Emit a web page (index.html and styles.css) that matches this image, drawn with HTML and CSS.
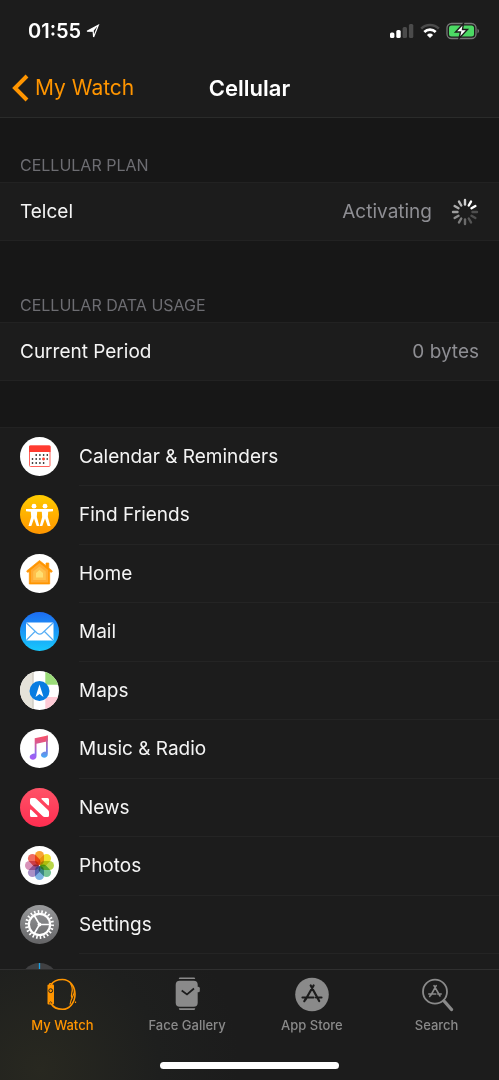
FILE: index.html
```html
<!DOCTYPE html>
<html lang="en">
<head>
    <meta charset="UTF-8">
    <meta name="viewport" content="width=device-width, initial-scale=1.0">
    <title>Cellular</title>
    <link rel="stylesheet" href="styles.css">
</head>
<body>
    <header class="top">
        <div class="status-bar">
            <div class="clock">
                <span>01:55</span>
                <svg width="14" height="14" viewBox="0 0 14 14"><path d="M1 7.2 12.3 1.2 7.6 13 7.2 7.2Z" fill="none" stroke="#fff" stroke-width="1.2"/><path d="M1 7.2 12.3 1.2 7.2 7.2Z" fill="#fff"/></svg>
            </div>
            <div class="status-icons">
                <svg width="24" height="16" viewBox="0 0 24 16">
                    <rect x="0" y="9.5" width="4.4" height="5.500" rx="1.500" fill="#fff"/>
                    <rect x="6.300" y="7" width="4.400" height="8" rx="1.500" fill="#fff"/>
                    <rect x="12.600" y="4" width="4.400" height="11" rx="1.500" fill="#4b4b4b"/>
                    <rect x="18.900" y="1" width="4.400" height="14" rx="1.500" fill="#4b4b4b"/>
                </svg>
                <svg width="20" height="16" viewBox="0 0 20 16" fill="none" stroke-width="2.6">
                    <path d="M1.2 5.6a12.4 12.4 0 0 1 17.6 0" stroke="#4b4b4b"/>
                    <path d="M4.3 9a8 8 0 0 1 11.4 0" stroke="#fff"/>
                    <path d="M10 15 6.9 11.9a4.4 4.4 0 0 1 6.2 0Z" fill="#fff"/>
                </svg>
                <svg width="34" height="18" viewBox="0 0 34 18">
                    <rect x="1" y="1.5" width="29" height="15" rx="4.5" fill="none" stroke="#777" stroke-width="1.3"/>
                    <path d="M31.5 6.5q3 2.500 0 5Z" fill="#777"/>
                    <rect x="3" y="3.500" width="25" height="11" rx="2.500" fill="#4cd964"/>
                    <path d="M17.500 1.500 9.500 10h5l-1.500 6.500 8.500-9h-5Z" fill="#fff" stroke="#1c1c1c" stroke-width="1.4"/>
                </svg>
            </div>
        </div>
        <nav class="nav-bar">
            <a class="back" href="#">
                <svg width="18" height="28" viewBox="0 0 18 28"><path d="M15 2 3 14l12 12" fill="none" stroke="#ff9500" stroke-width="4"/></svg>
                <span>My Watch</span>
            </a>
            <h1>Cellular</h1>
        </nav>
    </header>

    <main class="content">
        <section class="group">
            <h2>CELLULAR PLAN</h2>
            <div class="row">
                <span>Telcel</span>
                <span class="value">Activating
                    <svg class="spinner" width="28" height="28" viewBox="-14 -14 28 28" stroke="#fff" stroke-width="2.4" stroke-linecap="round">
                        <path d="M0-12V-7.500" opacity=".8"/>
                        <path d="M0-12V-7.500" transform="rotate(30)"/>
                        <path d="M0-12V-7.500" transform="rotate(60)"/>
                        <path d="M0-12V-7.500" transform="rotate(90)" opacity=".22"/>
                        <path d="M0-12V-7.500" transform="rotate(120)" opacity=".22"/>
                        <path d="M0-12V-7.500" transform="rotate(150)" opacity=".25"/>
                        <path d="M0-12V-7.500" transform="rotate(180)" opacity=".34"/>
                        <path d="M0-12V-7.500" transform="rotate(210)" opacity=".42"/>
                        <path d="M0-12V-7.500" transform="rotate(240)" opacity=".5"/>
                        <path d="M0-12V-7.500" transform="rotate(270)" opacity=".57"/>
                        <path d="M0-12V-7.500" transform="rotate(300)" opacity=".63"/>
                        <path d="M0-12V-7.500" transform="rotate(330)" opacity=".7"/>
                    </svg>
                </span>
            </div>
        </section>

        <section class="group">
            <h2>CELLULAR DATA USAGE</h2>
            <div class="row">
                <span>Current Period</span>
                <span class="value">0 bytes</span>
            </div>
        </section>

        <ul class="apps">
            <li>
                <svg class="app-icon" viewBox="0 0 39 39">
                    <circle cx="19.5" cy="19.5" r="19.500" fill="#fff"/>
                    <rect x="9.500" y="9" width="20.500" height="20.500" rx="1" fill="#fff" stroke="#ff6159"/>
                    <path d="M9 9.500q0-1 1-1h19.500q1 0 1 1V15H9Z" fill="#ff3b30"/>
                    <path d="M15.500 18h12.500M11.800 22h16M11.800 26h12.500" stroke="#444" stroke-width="2" stroke-dasharray="1.400 2.300"/>
                    <circle cx="23.500" cy="22" r="1.400" fill="#ff3b30"/>
                </svg>
                <span>Calendar &amp; Reminders</span>
            </li>
            <li>
                <svg class="app-icon" viewBox="0 0 39 39">
                    <linearGradient id="friends" x2="0" y2="1"><stop stop-color="#fc0"/><stop offset="1" stop-color="#ff9500"/></linearGradient>
                    <circle cx="19.500" cy="19.500" r="19.500" fill="url(#friends)"/>
                    <g fill="#fff">
                        <circle cx="14" cy="11.200" r="2.400"/>
                        <circle cx="25" cy="11.200" r="2.400"/>
                        <path d="M6 14h27v2.200l-4.800.6-.4 5.200 2.700 9h-2.800L25 23.500 22.300 31h-2.600l2.500-9-.4-5.200h-4.600l-.4 5.200 2.500 9h-2.600L14 23.500 11.300 31H8.500l2.700-9-.4-5.200-4.800-.6Z"/>
                    </g>
                </svg>
                <span>Find Friends</span>
            </li>
            <li>
                <svg class="app-icon" viewBox="0 0 39 39">
                    <circle cx="19.500" cy="19.500" r="19.500" fill="#fff"/>
                    <path d="M19.500 6.500 26 11.700V9h2.800v5l3.600 3-1.100 1.400-1.600-1V30H9.300V17.400l-1.600 1L6.600 17Z" fill="#ff9500" stroke="#ff9500" stroke-linejoin="round" stroke-width=".7"/>
                    <path d="m19.500 9 8.700 7v12.500H10.800V16Z" fill="#ffac35"/>
                    <path d="m19.500 12.500 6.300 5V26H13.200v-8.500Z" fill="#ffc04b"/>
                    <path d="m19.500 16 3.500 3v4.500h-7V19Z" fill="#ffdf72"/>
                </svg>
                <span>Home</span>
            </li>
            <li>
                <svg class="app-icon" viewBox="0 0 39 39">
                    <linearGradient id="mail" x2="0" y2="1"><stop stop-color="#1d6cf2"/><stop offset="1" stop-color="#18c8fc"/></linearGradient>
                    <circle cx="19.500" cy="19.500" r="19.500" fill="url(#mail)"/>
                    <rect x="6" y="10.500" width="27.500" height="18" rx="1.300" fill="#fff"/>
                    <path d="m6.500 11 10.500 10q2.700 2.400 5.400 0L33 11M6.500 28l8.500-8.500M33 28l-8.500-8.500" fill="none" stroke="#56aef5" stroke-width="1.200"/>
                </svg>
                <span>Mail</span>
            </li>
            <li>
                <svg class="app-icon" viewBox="0 0 39 39">
                    <clipPath id="disc"><circle cx="19.500" cy="19.500" r="19.500"/></clipPath>
                    <g clip-path="url(#disc)">
                        <path d="M0 0h39v39H0Z" fill="#fff"/>
                        <path d="M0 0h13.700v39H0Z" fill="#e5e2d9"/>
                        <path d="M12 0h1.700v39H12Z" fill="#d6d3ca"/>
                        <path d="M25.300 0H39v13.700H25.300Z" fill="#9bdc79"/>
                        <path d="M25.300 26H39v13H25.300Z" fill="#ffcbd6"/>
                    </g>
                    <circle cx="19.500" cy="20" r="10" fill="#087ce1"/>
                    <path d="M19.500 13.500 23.500 26l-4-3-4 3Z" fill="#fff"/>
                </svg>
                <span>Maps</span>
            </li>
            <li>
                <svg class="app-icon" viewBox="0 0 39 39">
                    <linearGradient id="music" x1=".6" y1="0" x2=".4" y2="1"><stop stop-color="#fb5064"/><stop offset=".4" stop-color="#d05a9c"/><stop offset=".75" stop-color="#8a6cf0"/><stop offset="1" stop-color="#a55bf5"/></linearGradient>
                    <linearGradient id="note" x2="0" y2="1"><stop stop-color="#ee5572"/><stop offset=".6" stop-color="#8573dc"/><stop offset="1" stop-color="#43aef8"/></linearGradient>
                    <circle cx="19.500" cy="19.500" r="19.500" fill="#fff"/>
                    <path d="M14.700 9.200 27.800 6.500v5.700l-11.300 2.500V27c0 5-6.500 4.600-6.800 1.300-.1-3 3-3.500 5-3.900Z" fill="url(#music)"/>
                    <path d="M26 7l1.800-.5V25c0 5-6.500 4.600-6.800 1.300-.1-3 3-3.500 5-3.900Z" fill="url(#note)"/>
                </svg>
                <span>Music &amp; Radio</span>
            </li>
            <li>
                <svg class="app-icon" viewBox="0 0 39 39">
                    <linearGradient id="news" x2="0" y2="1"><stop stop-color="#ff5368"/><stop offset="1" stop-color="#ff2d50"/></linearGradient>
                    <circle cx="19.500" cy="19.500" r="19.500" fill="url(#news)"/>
                    <path d="M11.500 10h3q1 0 1.700.7L28 22q1 1 1 2v3.500q0 1.500-1.500 1.500h-3q-1 0-1.700-.7L11 17q-1-1-1-2v-3.500q0-1.500 1.500-1.500ZM22 10h5.500q1.500 0 1.500 1.500v5.300q-.3 1.200-1.200.4l-6.200-6q-.7-.9.4-1.200ZM10 22.200q.3-1.200 1.200-.4l6.200 6q.7.900-.4 1.200h-5.500q-1.500 0-1.500-1.500Z" fill="#fff"/>
                </svg>
                <span>News</span>
            </li>
            <li>
                <svg class="app-icon" viewBox="0 0 39 39">
                    <circle cx="19.500" cy="19.500" r="19.500" fill="#fff"/>
                    <g class="petals">
                        <rect x="15" y="5" width="9" height="14" rx="4.500" fill="#f89a1c"/>
                        <rect x="15" y="5" width="9" height="14" rx="4.500" fill="#efdf16" transform="rotate(45 19.500 19.500)"/>
                        <rect x="15" y="5" width="9" height="14" rx="4.500" fill="#b1d235" transform="rotate(90 19.500 19.500)"/>
                        <rect x="15" y="5" width="9" height="14" rx="4.500" fill="#66bd8b" transform="rotate(135 19.500 19.500)"/>
                        <rect x="15" y="5" width="9" height="14" rx="4.500" fill="#6da9df" transform="rotate(180 19.500 19.500)"/>
                        <rect x="15" y="5" width="9" height="14" rx="4.500" fill="#a184c0" transform="rotate(225 19.500 19.500)"/>
                        <rect x="15" y="5" width="9" height="14" rx="4.500" fill="#d486b1" transform="rotate(270 19.500 19.500)"/>
                        <rect x="15" y="5" width="9" height="14" rx="4.500" fill="#f05c50" transform="rotate(315 19.500 19.500)"/>
                    </g>
                </svg>
                <span>Photos</span>
            </li>
            <li>
                <svg class="app-icon" viewBox="0 0 39 39">
                    <linearGradient id="gear" x2="0" y2="1"><stop stop-color="#9a9b9d"/><stop offset="1" stop-color="#646466"/></linearGradient>
                    <circle cx="19.500" cy="19.500" r="19.500" fill="url(#gear)"/>
                    <g fill="none" stroke="#fff">
                        <circle cx="19.500" cy="19.500" r="10.600" stroke-width="2.200"/>
                        <circle cx="19.500" cy="19.500" r="13" stroke-width="3" pathLength="88" stroke-dasharray="1.700 2.300"/>
                        <path d="M19.500 19.500h11M19.500 19.500 14 10M19.500 19.500 14 29" stroke-width="1.600"/>
                    </g>
                    <circle cx="19.500" cy="19.500" r="1.900" fill="#fff"/>
                </svg>
                <span>Settings</span>
            </li>
            <li>
                <svg class="app-icon" viewBox="0 0 39 39">
                    <circle cx="19.500" cy="19.500" r="19.500" fill="#404042"/>
                    <path d="M19.500 0v20" stroke="#1ba1e2" stroke-width="1.300"/>
                </svg>
            </li>
        </ul>
    </main>

    <footer class="bottom">
        <nav class="tabs">
            <a class="tab active" href="#">
                <svg width="36" height="36" viewBox="0 0 36 36" fill="none" stroke="currentColor" stroke-width="1.600">
                    <path d="M7 8C9 4.500 13.500 2.500 18.500 2.500c7 0 12.500 6.500 12.500 14.800s-5.500 15-12.500 15C13.500 32.300 9 30 7 26.500"/>
                    <path d="M26.500 6.500c1.700 3 2.300 6.300 1.300 9.300-.7 2.200-.7 4 .4 6.200M30.500 12c.3 3.500-.7 5.500-2 8-1.200 2.300-2 4.500-2.500 7.500M31.500 24.500v1.500" stroke-width="1.200"/>
                    <rect x="3.500" y="7.500" width="6.500" height="20" rx="1" fill="currentColor" stroke="none"/>
                    <circle cx="6.700" cy="13.700" r="1.900" stroke="#202120" stroke-width="1"/>
                    <path d="M5.700 26.500v-1q1-1.500 2 0v1" stroke="#202120" stroke-width=".8"/>
                    <path d="M5.500 8V6.500h2V9" stroke-width="1"/>
                </svg>
                <span>My Watch</span>
            </a>
            <a class="tab" href="#">
                <svg width="36" height="36" viewBox="0 0 36 36" fill="currentColor">
                    <path d="M10.500 .5h15l.8 1.600H9.700ZM9.700 31.200h16.600l-.8 1.700h-15Z"/>
                    <rect x="6.700" y="3.700" width="22" height="26" rx="4"/>
                    <rect x="27" y="9.700" width="3.800" height="5.600" rx="1.500"/>
                    <path d="m12.700 13.500 5.300 4 7-6" fill="none" stroke="#1c1c1c" stroke-width="1.700"/>
                </svg>
                <span>Face Gallery</span>
            </a>
            <a class="tab" href="#">
                <svg width="36" height="36" viewBox="0 0 36 36">
                    <circle cx="18" cy="17.500" r="16.800" fill="currentColor"/>
                    <path d="m19.600 8.500-8 14M16.700 8.500l8.500 15.500M8.500 20.500h11M22 20.500h5.500M11.300 22.500l-1 1.700" fill="none" stroke="#1c1c1c" stroke-width="2.200" stroke-linecap="round"/>
                </svg>
                <span>App Store</span>
            </a>
            <a class="tab" href="#">
                <svg width="36" height="36" viewBox="0 0 36 36" fill="none" stroke="currentColor" stroke-linecap="round">
                    <circle cx="16" cy="14.700" r="12" stroke-width="1.800"/>
                    <path d="m25.500 24.500 7 8" stroke-width="3.400"/>
                    <path d="m17.200 8.700-5.200 9.300M15 8.700l6 10.300M9.800 17h7M18.800 17h3.400M11.200 18.700l-.5.800" stroke-width="1.600"/>
                </svg>
                <span>Search</span>
            </a>
        </nav>
        <div class="home-indicator"></div>
    </footer>
</body>
</html>
```
FILE: styles.css
```css
* {
    box-sizing: border-box;
}

body {
    margin: 0;
    height: 100vh;
    display: flex;
    flex-direction: column;
    background-color: #171717;
    color: #f4f4f4;
    font-family: Inter, "Liberation Sans", sans-serif;
    font-size: 19px;
    line-height: 24px;
}

svg {
    display: block;
    flex-shrink: 0;
}

a {
    text-decoration: none;
}

.top {
    background-color: #1c1c1c;
    border-bottom: 1px solid #2a2b2a;
}

.status-bar {
    display: flex;
    justify-content: space-between;
    align-items: center;
    height: 59px;
    padding: 3px 19px 0 28px;
}

.clock {
    display: flex;
    align-items: center;
    gap: 5px;
    color: #fff;
    font-size: 20px;
    font-weight: 600;
}

.status-icons {
    display: flex;
    align-items: center;
    gap: 6px;
}

.nav-bar {
    display: grid;
    grid-template-columns: 1fr auto 1fr;
    align-items: center;
    height: 58px;
    padding: 0 12px;
}

.back {
    display: flex;
    align-items: center;
    gap: 5px;
    color: #ff9500;
    font-size: 21px;
}

h1 {
    margin: 0;
    color: #fff;
    font-size: 22px;
    font-weight: 600;
}

.content {
    flex: 1;
    min-height: 0;
    overflow: hidden;
}

h2 {
    margin: 0;
    padding: 36px 20px 6px;
    color: #6d6d72;
    font-size: 16px;
    font-weight: 400;
    line-height: 22px;
}

.row {
    display: flex;
    justify-content: space-between;
    align-items: center;
    height: 59px;
    padding: 0 20px;
    background-color: #1c1c1c;
    border-top: 1px solid #222;
    border-bottom: 1px solid #222;
}

.group + .group {
    margin-top: 17px;
}

.value {
    display: flex;
    align-items: center;
    gap: 19px;
    color: #8e8e93;
}

.apps {
    margin: 46px 0 0;
    padding: 0;
    list-style: none;
    background-color: #1c1c1c;
    border-top: 1px solid #222;
}

.apps li {
    display: flex;
    align-items: center;
    gap: 20px;
    height: 58px;
    padding-left: 20px;
}

.apps li:nth-child(even) {
    height: 59px;
}

.apps span {
    flex: 1;
    align-self: stretch;
    display: flex;
    align-items: center;
    border-bottom: 1px solid #242424;
}

.app-icon {
    width: 39px;
    height: 39px;
    margin-bottom: 2px;
}

.petals rect {
    mix-blend-mode: multiply;
    opacity: 0.9;
}

.bottom {
    height: 111px;
    background: radial-gradient(circle at 8% 90%, #282820, #1e1f1e 120px, #1c1c1c 200px);
    border-top: 1px solid #2f2f2f;
}

.tabs {
    display: grid;
    grid-template-columns: repeat(4, 1fr);
    padding-top: 7px;
}

.tab {
    display: flex;
    flex-direction: column;
    align-items: center;
    gap: 3px;
    color: #8a8a8a;
    font-size: 13px;
    font-weight: 500;
    line-height: 18px;
}

.tab.active {
    color: #ff9500;
}

.home-indicator {
    width: 36%;
    height: 7px;
    margin: 28px auto 0;
    border-radius: 4px;
    background-color: #fff;
}
```
